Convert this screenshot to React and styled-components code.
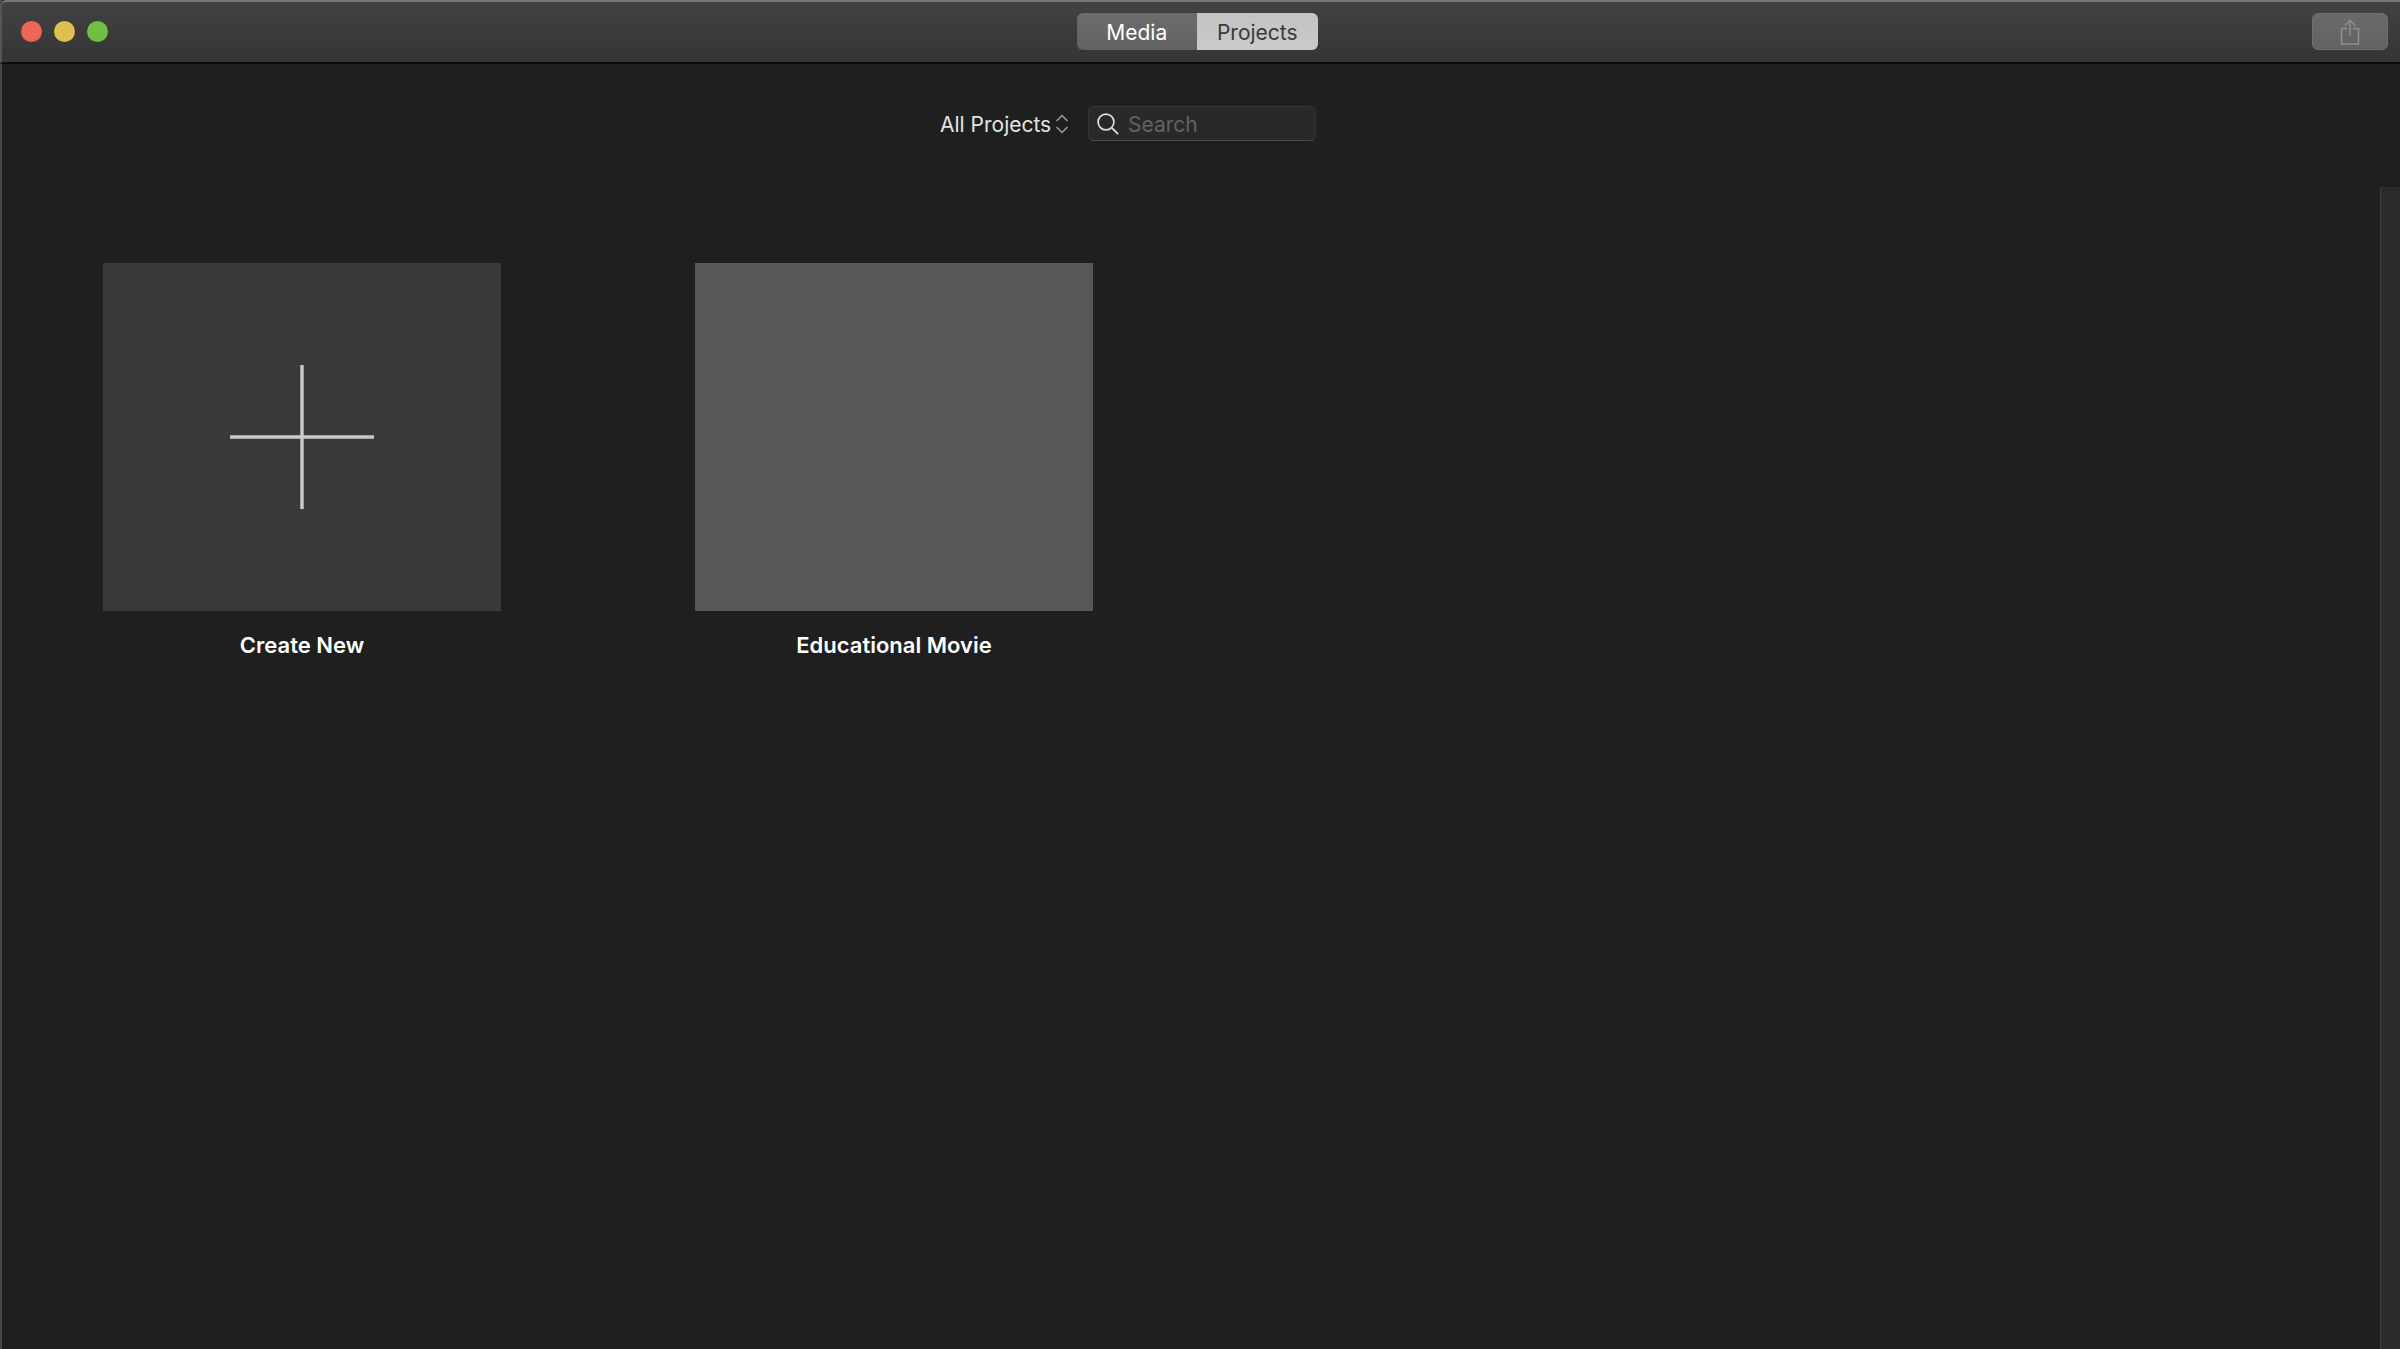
import React, { useState } from "react";
import styled, { createGlobalStyle } from "styled-components";

const GlobalStyle = createGlobalStyle`
  *, *::before, *::after { box-sizing: border-box; }
  body {
    margin: 0;
    background: #1f1f1f;
    color: #e4e4e4;
    font-family: Inter, "Liberation Sans", sans-serif;
    font-size: 21px;
    line-height: 28px;
  }
  button, input, select { font: inherit; color: inherit; margin: 0; }
`;

const Window = styled.div`
  display: flex;
  flex-direction: column;
  min-height: 100vh;
  border-left: 2px solid #484848;
  background: #1f1f1f;
`;

const TitleBar = styled.header`
  display: grid;
  grid-template-columns: 1fr auto 1fr;
  align-items: center;
  height: 64px;
  padding: 0 12px 1px 4px;
  margin-left: -2px;
  border-top: 2px solid #777;
  border-bottom: 2px solid #0d0d0d;
  border-left: 2px solid #555;
  border-top-left-radius: 6px;
  background: linear-gradient(#424242, #353535);
`;

const WindowControls = styled.div`
  display: flex;
  gap: 12px;
  padding-left: 15px;
`;

const WindowButton = styled.button`
  width: 21px;
  height: 21px;
  padding: 0;
  border: 0;
  border-radius: 50%;
  background: ${(p) => p.$color};
`;

const Segments = styled.nav`
  display: grid;
  grid-template-columns: 1fr 1fr;
  width: 241px;
  height: 37px;
  border-radius: 6px;
  overflow: hidden;
`;

const Segment = styled.button`
  padding: 2px 0 0;
  border: 0;
  color: ${(p) => (p.$active ? "#393939" : "#fff")};
  background: ${(p) =>
    p.$active ? "linear-gradient(#c3c3c3, #cacaca)" : "linear-gradient(#6c6c6c, #616161)"};
`;

const ShareButton = styled.button`
  display: grid;
  place-items: center;
  justify-self: end;
  width: 76px;
  height: 37px;
  padding: 0;
  border: 1px solid #707070;
  border-radius: 6px;
  color: #909090;
  background: linear-gradient(#6b6b6b, #626262);
`;

const FilterBar = styled.div`
  display: flex;
  justify-content: center;
  align-items: center;
  gap: 20px;
  height: 123px;
  padding: 0 146px 4px 0;
`;

const Picker = styled.label`
  display: grid;
  align-items: center;
  svg {
    grid-area: 1 / 1;
    justify-self: end;
    pointer-events: none;
  }
`;

const PickerSelect = styled.select`
  grid-area: 1 / 1;
  appearance: none;
  padding: 2px 16px 0 0;
  border: 0;
  background: transparent;
`;

const SearchField = styled.label`
  display: flex;
  align-items: center;
  gap: 9px;
  width: 228px;
  height: 35px;
  padding: 0 8px;
  border: 1px solid #343434;
  border-bottom-color: #4a4a4a;
  border-radius: 5px;
  background: #292929;
`;

const SearchInput = styled.input`
  flex: 1;
  min-width: 0;
  padding: 2px 0 0;
  border: 0;
  outline: 0;
  background: transparent;
  &::placeholder { color: #626262; opacity: 1; }
`;

const Content = styled.main`
  flex: 1;
  display: flex;
`;

const ProjectGrid = styled.div`
  flex: 1;
  display: flex;
  flex-wrap: wrap;
  align-content: flex-start;
  gap: 80px 194px;
  padding: 76px 101px;
`;

const ProjectCard = styled.button`
  display: flex;
  flex-direction: column;
  align-items: center;
  gap: 20px;
  padding: 0;
  border: 0;
  background: transparent;
  color: #fff;
  font-size: 22px;
  font-weight: 600;
`;

const Thumbnail = styled.span`
  display: grid;
  place-items: center;
  width: 398px;
  height: 348px;
  background: ${(p) => (p.$empty ? "#3a3a3a" : "#575757")};
`;

const ScrollTrack = styled.div`
  width: 20px;
  border-left: 1px solid #3d3d3d;
  background: #2b2b2b;
`;

function PlusIcon() {
  return (
    <svg width="144" height="144" viewBox="0 0 144 144" stroke="#cacaca" strokeWidth="3.4" aria-hidden="true">
      <path d="M72 0v144M0 72h144" />
    </svg>
  );
}

function ShareIcon() {
  return (
    <svg width="20" height="28" viewBox="0 0 20 28" fill="none" stroke="currentColor" strokeWidth="1.5" aria-hidden="true">
      <path d="M7 10.5H1.5V26h17V10.5H13M10 18V2.5M5 7.5l5-5.2 5 5.2" />
    </svg>
  );
}

function UpDownIcon() {
  return (
    <svg width="12" height="20" viewBox="0 0 12 20" fill="none" stroke="#969696" strokeWidth="1.7" strokeLinecap="round" strokeLinejoin="round" aria-hidden="true">
      <path d="M1 6.5l5-5 5 5M1 13.5l5 5 5-5" />
    </svg>
  );
}

function SearchIcon() {
  return (
    <svg width="22" height="22" viewBox="0 0 22 22" fill="none" stroke="#e0e0e0" strokeWidth="1.7" strokeLinecap="round" aria-hidden="true">
      <circle cx="9" cy="9" r="7.9" />
      <path d="M14.8 14.8l5.8 5.8" />
    </svg>
  );
}

const controls = [
  { name: "Close", color: "#ec655a" },
  { name: "Minimize", color: "#e0c04d" },
  { name: "Zoom", color: "#71be47" },
];

export default function App() {
  const [tab, setTab] = useState("Projects");
  const [query, setQuery] = useState("");
  return (
    <>
      <GlobalStyle />
      <Window>
        <TitleBar>
          <WindowControls>
            {controls.map((c) => (
              <WindowButton key={c.name} type="button" aria-label={c.name} $color={c.color} />
            ))}
          </WindowControls>
          <Segments>
            {["Media", "Projects"].map((name) => (
              <Segment key={name} type="button" $active={tab === name} aria-pressed={tab === name} onClick={() => setTab(name)}>
                {name}
              </Segment>
            ))}
          </Segments>
          <ShareButton type="button" aria-label="Share">
            <ShareIcon />
          </ShareButton>
        </TitleBar>
        <FilterBar>
          <Picker>
            <PickerSelect aria-label="Show projects">
              <option>All Projects</option>
            </PickerSelect>
            <UpDownIcon />
          </Picker>
          <SearchField>
            <SearchIcon />
            <SearchInput type="text" aria-label="Search" placeholder="Search" value={query} onChange={(e) => setQuery(e.target.value)} />
          </SearchField>
        </FilterBar>
        <Content>
          <ProjectGrid>
            <ProjectCard type="button">
              <Thumbnail $empty>
                <PlusIcon />
              </Thumbnail>
              Create New
            </ProjectCard>
            <ProjectCard type="button">
              <Thumbnail />
              Educational Movie
            </ProjectCard>
          </ProjectGrid>
          <ScrollTrack />
        </Content>
      </Window>
    </>
  );
}
